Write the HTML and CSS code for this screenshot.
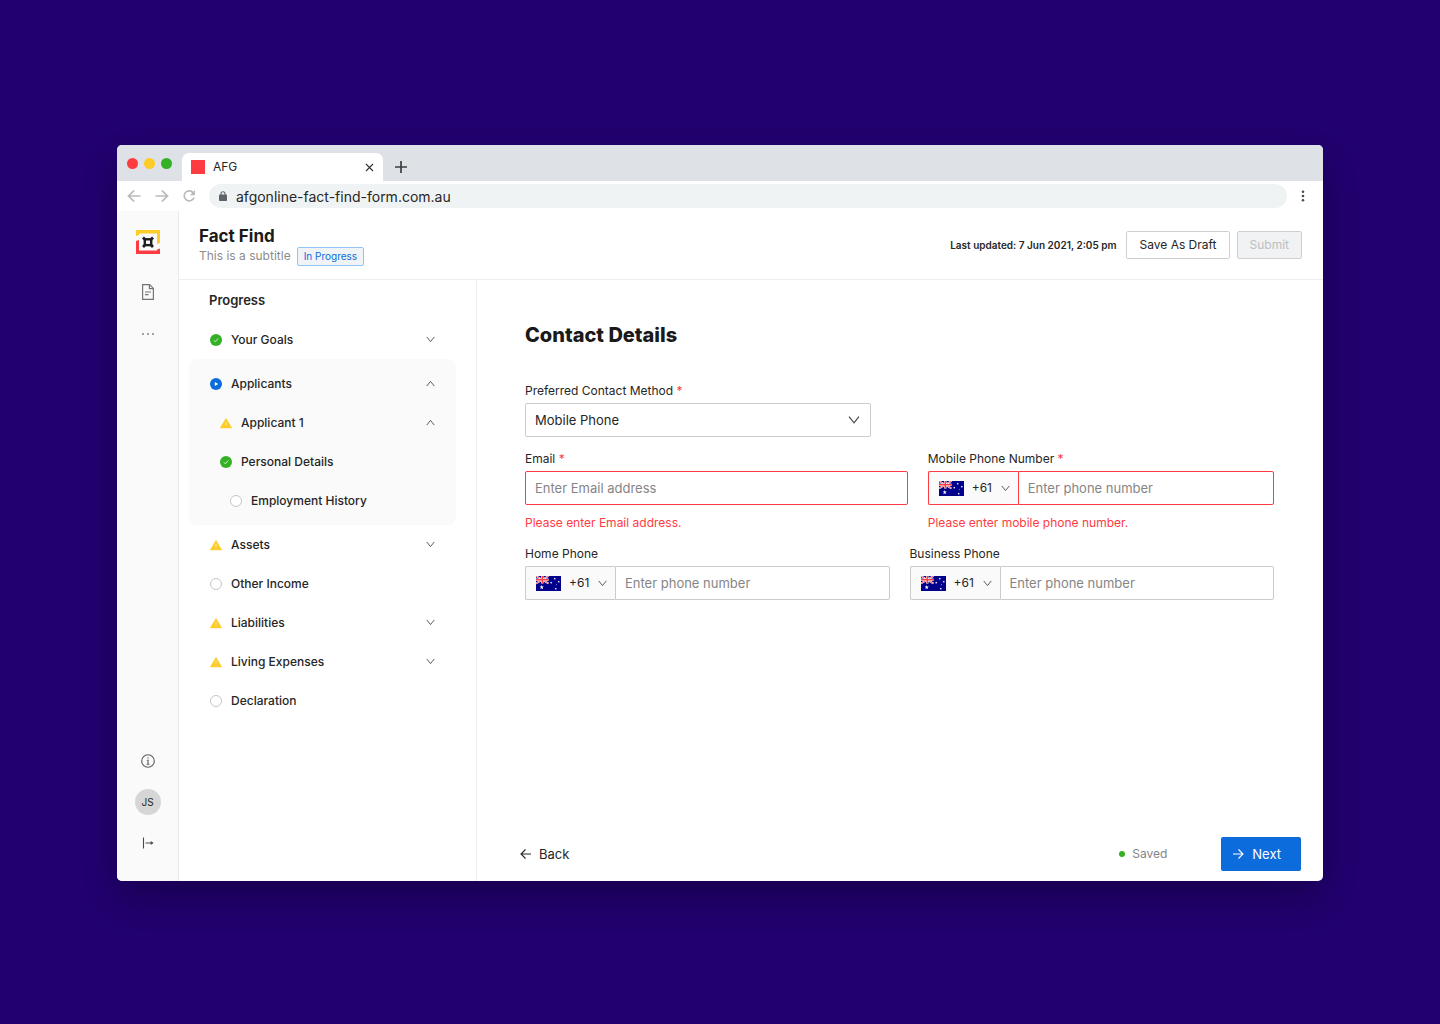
FILE: index.html
```html
<!DOCTYPE html>
<html lang="en">
<head>
    <meta charset="UTF-8">
    <meta name="viewport" content="width=device-width, initial-scale=1.0">
    <title>Fact Find</title>
    <link rel="stylesheet" href="styles.css">
</head>
<body>
<!-- shared icons -->
<svg class="sprite" width="0" height="0" aria-hidden="true">
    <symbol id="done" viewBox="0 0 12 12">
        <circle cx="6" cy="6" r="6" fill="#33b024"/>
        <path d="M3.8 6.2l1.5 1.6 2.9-3.4" fill="none" stroke="#d9f5d5" stroke-width="0.9"/>
    </symbol>
    <symbol id="current" viewBox="0 0 12 12">
        <circle cx="6" cy="6" r="6" fill="#0c6cdc"/>
        <path d="M4.8 4l3.4 2-3.400 2z" fill="#fff"/>
    </symbol>
    <symbol id="warning" viewBox="0 0 12 12">
        <path d="M6 1.2l5.8 9.8H.2z" fill="#fdcc26" stroke="#fdcc26" stroke-width="0.4" stroke-linejoin="round"/>
        <path d="M6 4.8v3M6 8.6v1" stroke="#fff3c4" stroke-width="0.8"/>
    </symbol>
    <symbol id="empty" viewBox="0 0 12 12">
        <circle cx="6" cy="6" r="5.5" fill="#fff" stroke="#bfbfbf" stroke-width="0.9"/>
    </symbol>
    <symbol id="down" viewBox="0 0 12 12">
        <path d="M1 2.600L6 8.800l5-6.200" fill="none" stroke="currentColor" stroke-width="1.200"/>
    </symbol>
    <symbol id="up" viewBox="0 0 12 12">
        <path d="M1 9.400L6 3.200l5 6.200" fill="none" stroke="currentColor" stroke-width="1.200"/>
    </symbol>
    <symbol id="star" viewBox="-5 -5 10 10">
        <path d="M0-5L1.2-1.6 4.8-1.6 1.9.6 3 4.2 0 2-3 4.2-1.9.6-4.8-1.6-1.2-1.6z" fill="#fff"/>
    </symbol>
    <symbol id="flag-au" viewBox="0 0 50 30">
        <path d="M0 0h50v30H0z" fill="#00008b"/>
        <path d="M0 0l25 15M25 0L0 15" stroke="#fff" stroke-width="3.6"/>
        <path d="M0 0l25 15M25 0L0 15" stroke="#fd3c42" stroke-width="1.6"/>
        <path d="M12.5 0v15M0 7.5h25" stroke="#fff" stroke-width="5"/>
        <path d="M12.5 0v15M0 7.5h25" stroke="#fd3c42" stroke-width="3"/>
        <use href="#star" x="7" y="18" width="9" height="9"/>
        <use href="#star" x="35" y="3" width="5" height="5"/>
        <use href="#star" x="28" y="11" width="5" height="5"/>
        <use href="#star" x="43" y="9" width="5" height="5"/>
        <use href="#star" x="39" y="16" width="3" height="3"/>
        <use href="#star" x="37" y="23" width="5" height="5"/>
    </symbol>
</svg>

<div class="browser">
    <div class="tab-bar">
        <span class="dot dot-red"></span>
        <span class="dot dot-yellow"></span>
        <span class="dot dot-green"></span>
        <div class="tab">
            <span class="favicon"></span>
            <span class="tab-title">AFG</span>
            <button type="button" class="icon-button" aria-label="Close tab">
                <svg width="9" height="9" viewBox="0 0 9 9"><path d="M1 1l7 7M8 1L1 8" stroke="#333" stroke-width="1.1"/></svg>
            </button>
        </div>
        <button type="button" class="icon-button new-tab" aria-label="New tab">
            <svg width="12" height="12" viewBox="0 0 12 12"><path d="M6 0v12M0 6h12" stroke="#3c3c3f" stroke-width="1.7"/></svg>
        </button>
    </div>
    <div class="toolbar">
        <button type="button" class="icon-button" aria-label="Go back">
            <svg width="14" height="12" viewBox="0 0 14 12"><path d="M13.5 6H1.5M7 .7L1.5 6 7 11.3" fill="none" stroke="#b8babd" stroke-width="1.7"/></svg>
        </button>
        <button type="button" class="icon-button" aria-label="Go forward">
            <svg width="14" height="12" viewBox="0 0 14 12"><path d="M.5 6h12M7 .7L12.5 6 7 11.3" fill="none" stroke="#b8babd" stroke-width="1.7"/></svg>
        </button>
        <button type="button" class="icon-button" aria-label="Reload">
            <svg width="12" height="12" viewBox="0 0 12 12"><path d="M10.2 2.8A5 5 0 1 0 11 7.4" fill="none" stroke="#b8babd" stroke-width="1.6"/><path d="M12 0v5.2H6.8z" fill="#b8babd"/></svg>
        </button>
        <div class="address">
            <svg width="8" height="10" viewBox="0 0 8 10"><path d="M2 4V2.7a2 2 0 0 1 4 0V4" fill="none" stroke="#5f6368" stroke-width="1.1"/><rect y="3.6" width="8" height="6.4" rx="0.8" fill="#5f6368"/></svg>
            <input type="text" class="address-input" aria-label="Address" value="afgonline-fact-find-form.com.au">
        </div>
        <button type="button" class="icon-button" aria-label="Menu">
            <svg width="4" height="12" viewBox="0 0 4 12" fill="#4a4c50"><circle cx="2" cy="1.7" r="1.3"/><circle cx="2" cy="6" r="1.3"/><circle cx="2" cy="10.3" r="1.3"/></svg>
        </button>
    </div>

    <div class="app">
        <aside class="sidebar">
            <svg class="logo" width="24" height="24" viewBox="0 0 24 24">
                <path d="M0 0h24v13l-3 1V3.5H3V5L0 6z" fill="#fdcc26"/>
                <path d="M0 11l3-1v10.500h18V19.500l3-1V24H0z" fill="#fd3c42"/>
                <g fill="none" stroke="#1f1f1f">
                    <rect x="8.800" y="9.300" width="6.400" height="5.800" stroke-width="2.400"/>
                    <path d="M7 7.500l2.500 2.500M17 7.500L14.500 10M7 17l2.500-2.500M17 17l-2.500-2.500" stroke-width="2.800"/>
                </g>
            </svg>
            <a href="#" class="side-link" aria-label="Documents">
                <svg width="12" height="16" viewBox="0 0 12 16" fill="none" stroke="#757575" stroke-width="1.2"><path d="M.6.6h7l3.8 3.8v11H.6zM7.4.8v3.8h3.8M3 8h6M3 10.6h3.5"/></svg>
            </a>
            <a href="#" class="side-link" aria-label="More">
                <svg width="12" height="4" viewBox="0 0 12 4" fill="#757575"><circle cx="1" cy="2" r="0.9"/><circle cx="6" cy="2" r="0.9"/><circle cx="11" cy="2" r="0.9"/></svg>
            </a>
            <div class="side-bottom">
                <a href="#" class="side-link" aria-label="Help">
                    <svg width="14" height="14" viewBox="0 0 14 14" fill="none" stroke="#5c5c5c" stroke-width="1.1"><circle cx="7" cy="7" r="6.3"/><path d="M7 3.3v1.3M5.8 6.3H7v4M5.6 10.3h2.8"/></svg>
                </a>
                <a href="#" class="avatar">JS</a>
                <a href="#" class="side-link" aria-label="Expand menu">
                    <svg width="12" height="12" viewBox="0 0 12 12"><path d="M1.5.5v11M3.5 6h7" stroke="#4a4a4a" stroke-width="1.1"/><path d="M8.7 3.9L11.5 6 8.7 8.1z" fill="#4a4a4a"/></svg>
                </a>
            </div>
        </aside>

        <div class="page">
            <header class="header">
                <div>
                    <h1>Fact Find</h1>
                    <div class="subtitle">
                        <span>This is a subtitle</span>
                        <span class="tag">In Progress</span>
                    </div>
                </div>
                <div class="header-actions">
                    <span class="updated">Last updated: 7 Jun 2021, 2:05 pm</span>
                    <button type="button" class="btn">Save As Draft</button>
                    <button type="button" class="btn" disabled>Submit</button>
                </div>
            </header>

            <div class="columns">
                <nav class="progress">
                    <h2>Progress</h2>
                    <a href="#" class="step"><svg class="status"><use href="#done"/></svg><span>Your Goals</span><svg class="chevron"><use href="#down"/></svg></a>
                    <div class="step-group">
                        <a href="#" class="step"><svg class="status"><use href="#current"/></svg><span>Applicants</span><svg class="chevron"><use href="#up"/></svg></a>
                        <a href="#" class="step level-2"><svg class="status"><use href="#warning"/></svg><span>Applicant 1</span><svg class="chevron"><use href="#up"/></svg></a>
                        <a href="#" class="step level-2"><svg class="status"><use href="#done"/></svg><span>Personal Details</span></a>
                        <a href="#" class="step level-3"><svg class="status"><use href="#empty"/></svg><span>Employment History</span></a>
                    </div>
                    <a href="#" class="step"><svg class="status"><use href="#warning"/></svg><span>Assets</span><svg class="chevron"><use href="#down"/></svg></a>
                    <a href="#" class="step"><svg class="status"><use href="#empty"/></svg><span>Other Income</span></a>
                    <a href="#" class="step"><svg class="status"><use href="#warning"/></svg><span>Liabilities</span><svg class="chevron"><use href="#down"/></svg></a>
                    <a href="#" class="step"><svg class="status"><use href="#warning"/></svg><span>Living Expenses</span><svg class="chevron"><use href="#down"/></svg></a>
                    <a href="#" class="step"><svg class="status"><use href="#empty"/></svg><span>Declaration</span></a>
                </nav>

                <form class="content">
                    <div class="fields">
                        <h2>Contact Details</h2>
                        <div class="row row-method">
                            <div class="field">
                                <label for="method">Preferred Contact Method <span class="required">*</span></label>
                                <div class="select">
                                    <select id="method" name="method">
                                        <option>Mobile Phone</option>
                                        <option>Email</option>
                                    </select>
                                    <svg class="chevron"><use href="#down"/></svg>
                                </div>
                            </div>
                        </div>
                        <div class="row row-email">
                            <div class="field invalid">
                                <label for="email">Email <span class="required">*</span></label>
                                <input type="email" id="email" name="email" placeholder="Enter Email address">
                                <p class="error">Please enter Email address.</p>
                            </div>
                            <div class="field invalid">
                                <label for="mobile">Mobile Phone Number <span class="required">*</span></label>
                                <div class="phone">
                                    <div class="code">
                                        <svg class="flag"><use href="#flag-au"/></svg>
                                        <select name="mobileCode" aria-label="Mobile country code"><option>+61</option></select>
                                        <svg class="chevron"><use href="#down"/></svg>
                                    </div>
                                    <input type="tel" id="mobile" name="mobile" placeholder="Enter phone number">
                                </div>
                                <p class="error">Please enter mobile phone number.</p>
                            </div>
                        </div>
                        <div class="row row-phones">
                            <div class="field">
                                <label for="home">Home Phone</label>
                                <div class="phone">
                                    <div class="code">
                                        <svg class="flag"><use href="#flag-au"/></svg>
                                        <select name="homeCode" aria-label="Home country code"><option>+61</option></select>
                                        <svg class="chevron"><use href="#down"/></svg>
                                    </div>
                                    <input type="tel" id="home" name="home" placeholder="Enter phone number">
                                </div>
                            </div>
                            <div class="field">
                                <label for="business">Business Phone</label>
                                <div class="phone">
                                    <div class="code">
                                        <svg class="flag"><use href="#flag-au"/></svg>
                                        <select name="businessCode" aria-label="Business country code"><option>+61</option></select>
                                        <svg class="chevron"><use href="#down"/></svg>
                                    </div>
                                    <input type="tel" id="business" name="business" placeholder="Enter phone number">
                                </div>
                            </div>
                        </div>
                    </div>
                    <footer class="footer">
                        <button type="button" class="back">
                            <svg width="11" height="10" viewBox="0 0 11 10"><path d="M11 5H1M5.5.5L1 5l4.5 4.5" fill="none" stroke="currentColor" stroke-width="1.1"/></svg>
                            Back
                        </button>
                        <span class="saved">Saved</span>
                        <button type="submit" class="next">
                            <svg width="11" height="10" viewBox="0 0 11 10"><path d="M0 5h10M5.5.5L10 5 5.5 9.5" fill="none" stroke="currentColor" stroke-width="1.1"/></svg>
                            Next
                        </button>
                    </footer>
                </form>
            </div>
        </div>
    </div>
</div>
</body>
</html>
```

FILE: styles.css
```css
* {
    box-sizing: border-box;
}
body {
    margin: 0;
    padding: 145px 117px 143px;
    min-height: 100vh;
    display: flex;
    background-color: #220070;
    color: #262626;
    font-family: Inter, "Liberation Sans", sans-serif;
    font-size: 12px;
    line-height: 16px;
}
h1, h2, p {
    margin: 0;
}
a {
    color: inherit;
    text-decoration: none;
}
button, input, select {
    font: inherit;
    color: inherit;
}
button {
    cursor: pointer;
}
svg {
    display: block;
    flex-shrink: 0;
}
.sprite {
    position: absolute;
}
.icon-button {
    padding: 0;
    border: none;
    background: none;
}

/* browser window */
.browser {
    flex: 1;
    min-width: 0;
    display: flex;
    flex-direction: column;
    background-color: #fff;
    border-radius: 5px;
    overflow: hidden;
    box-shadow: 0 16px 40px rgba(0, 0, 0, 0.3);
}
.tab-bar {
    display: flex;
    align-items: center;
    gap: 6px;
    height: 36px;
    padding-left: 10px;
    background-color: #dee1e6;
}
.dot {
    width: 11px;
    height: 11px;
    border-radius: 50%;
}
.dot-red {
    background-color: #fd3c42;
}
.dot-yellow {
    background-color: #fdcc26;
}
.dot-green {
    background-color: #33b024;
}
.tab {
    align-self: flex-end;
    display: flex;
    align-items: center;
    width: 201px;
    height: 28px;
    margin-left: 4px;
    padding: 0 9px;
    border-radius: 7px 7px 0 0;
    background-color: #fff;
}
.favicon {
    width: 14px;
    height: 14px;
    margin-right: 8px;
    background-color: #fd3c42;
}
.tab-title {
    flex: 1;
}
.new-tab {
    margin: 8px 0 0 6px;
}
.toolbar {
    display: flex;
    align-items: center;
    gap: 14px;
    height: 30px;
    padding: 0 18px 0 10px;
}
.address {
    flex: 1;
    display: flex;
    align-items: center;
    gap: 9px;
    height: 24px;
    padding: 0 10px;
    border-radius: 12px;
    background-color: #f0f3f4;
}
.address-input {
    flex: 1;
    padding: 2px 0 0;
    border: none;
    background: none;
    font-size: 14px;
}

/* left icon bar */
.app {
    flex: 1;
    display: flex;
}
.sidebar {
    display: flex;
    flex-direction: column;
    align-items: center;
    gap: 26px;
    width: 62px;
    padding: 19px 0 30px;
    border-right: 1px solid #ececec;
    background-color: #fafafa;
}
.side-link {
    display: flex;
    align-items: center;
    justify-content: center;
    width: 26px;
    height: 16px;
}
.logo {
    margin-bottom: 4px;
}
.side-bottom {
    display: flex;
    flex-direction: column;
    align-items: center;
    gap: 20px;
    margin-top: auto;
}
.avatar {
    width: 26px;
    height: 26px;
    border-radius: 50%;
    background-color: #d6d6d6;
    font-size: 10px;
    line-height: 26px;
    text-align: center;
}

/* page header */
.page {
    flex: 1;
    min-width: 0;
    display: flex;
    flex-direction: column;
}
.header {
    display: flex;
    align-items: center;
    justify-content: space-between;
    height: 69px;
    padding: 0 21px 0 20px;
    border-bottom: 1px solid #efefef;
}
h1 {
    font-size: 17px;
    line-height: 22px;
    color: #1a1a1a;
}
.subtitle {
    display: flex;
    align-items: center;
    gap: 6px;
    color: #8c8c8c;
}
.tag {
    padding: 0 6px;
    border: 1px solid #91c5f5;
    border-radius: 2px;
    background-color: #f0f4f7;
    color: #0c6cdc;
    font-size: 10px;
    line-height: 17px;
}
.header-actions {
    display: flex;
    align-items: center;
    gap: 7px;
}
.updated {
    margin-right: 3px;
    font-size: 10px;
    font-weight: 600;
}
.btn {
    height: 28px;
    padding: 0 12px;
    border: 1px solid #cfcfcf;
    border-radius: 2px;
    background-color: #fff;
}
.btn:disabled {
    background-color: #f0f2f3;
    color: #bfbfbf;
    cursor: default;
}

/* progress navigation */
.columns {
    flex: 1;
    display: flex;
}
.progress {
    width: 298px;
    padding: 10px 20px 0 10px;
    border-right: 1px solid #efefef;
}
.progress h2 {
    margin-bottom: 10px;
    padding-left: 20px;
    font-size: 13px;
    font-weight: 600;
    line-height: 20px;
}
.step {
    display: flex;
    align-items: center;
    gap: 9px;
    height: 39px;
    padding: 0 21px;
    font-weight: 500;
}
.step span {
    flex: 1;
}
.step-group {
    padding: 5px 0;
    border-radius: 8px;
    background-color: #fafafa;
}
.level-2 {
    padding-left: 31px;
}
.level-3 {
    padding-left: 41px;
}
.status {
    width: 12px;
    height: 12px;
}
.chevron {
    width: 9px;
    height: 9px;
    color: #4a4a4a;
}

/* form */
.content {
    flex: 1;
    display: flex;
    flex-direction: column;
    justify-content: space-between;
}
.fields {
    display: flex;
    flex-direction: column;
    gap: 14px;
    padding: 41px 49px 0 48px;
}
.fields h2 {
    margin-bottom: 20px;
    font-size: 20px;
    font-weight: 800;
    line-height: 28px;
    color: #1a1a1a;
}
.row {
    display: grid;
    gap: 20px;
}
.row-method {
    grid-template-columns: 19fr 21fr;
}
.row-email {
    grid-template-columns: 21fr 19fr;
}
.row-phones {
    grid-template-columns: 1fr 1fr;
}
.field label {
    display: block;
    margin-bottom: 4px;
}
.required {
    color: #fd3c42;
}
.field input, .select select {
    width: 100%;
    height: 34px;
    padding: 0 9px;
    border: 1px solid #c9cccf;
    border-radius: 2px;
    background-color: #fff;
    font-size: 13px;
}
.field input::placeholder {
    color: #858585;
    opacity: 1;
}
.select {
    display: grid;
    align-items: center;
}
.select select, .code select {
    appearance: none;
}
.select select, .select .chevron {
    grid-area: 1 / 1;
}
.select .chevron {
    width: 12px;
    height: 12px;
    justify-self: end;
    margin-right: 11px;
    pointer-events: none;
}
.phone {
    display: flex;
}
.code {
    display: flex;
    align-items: center;
    gap: 8px;
    padding: 0 8px 0 10px;
    border: 1px solid #c9cccf;
    border-right: none;
    border-radius: 2px 0 0 2px;
    background-color: #fafafa;
}
.code select {
    padding: 0;
    border: none;
    background: none;
}
.flag {
    width: 25px;
    height: 15px;
}
.phone input {
    flex: 1;
    min-width: 0;
    border-radius: 0 2px 2px 0;
}
.field.invalid input, .invalid .code {
    border-color: #fd3c42;
}
.error {
    margin-top: 9px;
    color: #fd3c42;
    line-height: 18px;
}

/* footer */
.footer {
    display: flex;
    align-items: center;
    padding: 0 22px 10px 43px;
}
.back, .next {
    display: flex;
    align-items: center;
    gap: 8px;
    height: 34px;
    padding: 0;
    border: none;
    border-radius: 2px;
    background: none;
    font-size: 13px;
}
.saved {
    display: flex;
    align-items: center;
    gap: 7px;
    margin: 0 54px 0 auto;
    color: #858585;
}
.saved::before {
    content: "";
    width: 6px;
    height: 6px;
    border-radius: 50%;
    background-color: #33b024;
}
.next {
    padding: 0 20px 0 12px;
    background-color: #0c6cdc;
    color: #fff;
}
```
